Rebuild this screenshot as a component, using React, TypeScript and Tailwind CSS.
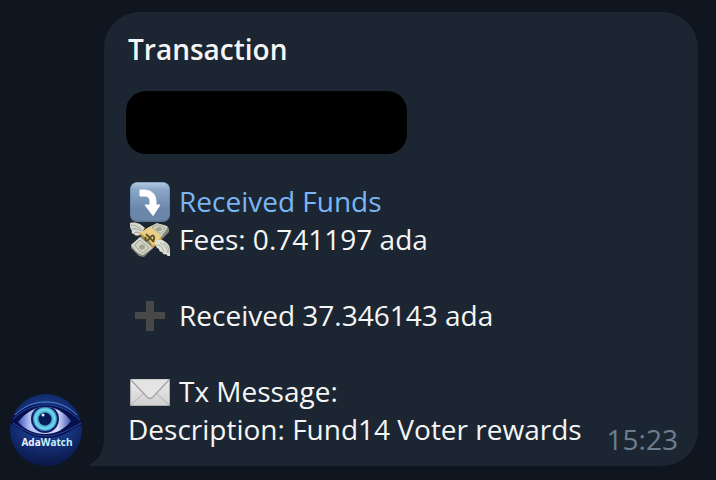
import type { ReactNode } from "react";

function Avatar() {
  return (
    <svg viewBox="0 0 72 72" className="size-[72px] shrink-0" role="img" aria-label="AdaWatch">
      <defs>
        <radialGradient id="disc" cx="50%" cy="45%" r="55%">
          <stop offset="0" stopColor="#1d3f94" />
          <stop offset="0.65" stopColor="#16337c" />
          <stop offset="1" stopColor="#0e2260" />
        </radialGradient>
        <linearGradient id="shade" x1="0" y1="0" x2="0" y2="1">
          <stop offset="0.6" stopColor="#081540" stopOpacity="0" />
          <stop offset="1" stopColor="#081540" stopOpacity="0.7" />
        </linearGradient>
        <linearGradient id="white" x1="0" y1="0" x2="1" y2="0">
          <stop offset="0" stopColor="#3f52b4" />
          <stop offset="0.22" stopColor="#b4c1f6" />
          <stop offset="0.75" stopColor="#d3dcfc" />
          <stop offset="1" stopColor="#3f52b4" />
        </linearGradient>
        <radialGradient id="iris">
          <stop offset="0.5" stopColor="#3a9ccc" />
          <stop offset="0.8" stopColor="#6fd6ea" />
          <stop offset="1" stopColor="#3289ba" />
        </radialGradient>
        <clipPath id="round"><circle cx="36" cy="36" r="36" /></clipPath>
        <clipPath id="lids"><path d="M8 28C17 17 26 13 35 13c10 0 18 4 26 14-7 9-16 13-26 13S15 36 8 28Z" /></clipPath>
      </defs>
      <g clipPath="url(#round)">
        <rect width="72" height="72" fill="url(#disc)" />
        <rect width="72" height="72" fill="url(#shade)" />
        <path d="M0 25C10 16 20 10 35 10s27 7 37 16v4C62 35 52 44 36 44S12 35 0 29Z" fill="#07104a" />
        <path d="M5 21C14 12 24 8 36 8s22 4 31 13" fill="none" stroke="#5485cc" strokeWidth="1" />
        <path d="M3 25C14 15 24 11 36 11s23 5 34 15" fill="none" stroke="#2449a8" strokeWidth="1" />
        <path d="M3 29C14 36 23 42 36 42s24-7 35-13" fill="none" stroke="#2a49a4" strokeWidth="1" />
        <path d="M8 28C17 17 26 13 35 13c10 0 18 4 26 14-7 9-16 13-26 13S15 36 8 28Z" fill="url(#white)" />
        <g clipPath="url(#lids)">
          <circle cx="35" cy="25" r="14" fill="#101d66" />
          <circle cx="35" cy="25" r="12" fill="url(#iris)" />
          <circle cx="35" cy="25" r="9.500" fill="none" stroke="#8feaf2" strokeWidth="2.500" strokeDasharray="1 1" opacity="0.4" />
          <circle cx="35" cy="25" r="6.500" fill="#081a55" />
          <circle cx="33" cy="21" r="1.500" fill="#d8f6ff" />
        </g>
      </g>
      <text x="37" y="52" textAnchor="middle" fontSize="10" fontWeight="700" fontFamily="Open Sans, sans-serif" fill="#f0f5ff">
        Ada<tspan fill="#c4f2fa">Watch</tspan>
      </text>
    </svg>
  );
}

function ArrowIcon() {
  return (
    <svg viewBox="0 -1 42 42" className="size-[42px] shrink-0" aria-hidden="true">
      <defs>
        <linearGradient id="key" x1="0" y1="0" x2="0" y2="1">
          <stop offset="0" stopColor="#b3cbe2" />
          <stop offset="0.18" stopColor="#8ba8c9" />
          <stop offset="0.7" stopColor="#6a87ab" />
          <stop offset="1" stopColor="#6a87aa" />
        </linearGradient>
      </defs>
      <rect x="2" y="1" width="40" height="40" rx="7" fill="#5b7595" />
      <rect x="2.500" y="1.500" width="39" height="38" rx="6.500" fill="url(#key)" />
      <path d="M12 9H16C23 9 28 13 28 21v3h4L25 34.500 17 24h5v-3c0-4-2-6-6-6h-4Z" fill="#fff" stroke="#fff" strokeWidth="1" strokeLinejoin="round" />
    </svg>
  );
}

function MoneyIcon() {
  return (
    <svg viewBox="0 -1 42 42" className="size-[42px] shrink-0" aria-hidden="true">
      <path d="M2 4c4-1 7 0 10 1l5 4-5 7c-3 1-5 1-6-1-2 0-3-2-2-3-2-2-2-5-2-8Z" fill="#d9dad0" />
      <path d="M3 6c4 0 8 2 11 5M4 10c3-1 6 0 9 2M6 14c2-1 4-1 6 0" fill="none" stroke="#94968a" strokeWidth="0.800" />
      <path d="M3 26 25 7 41 9v4L16 38 11 37 3 29Z" fill="#85877a" />
      <path d="M3 26 12 18 25 29 15 36C10 35 6 31 3 26Z" fill="#d3d4c5" />
      <path d="M21 8 29 4c4 2 8 1 11 4l-7 10Z" fill="#d3d4c5" />
      <path d="M7 26 12 21 21 29 15 34C12 32 9 30 7 26ZM24 8 29 6c3 1 6 1 8 3l-4 6Z" fill="none" stroke="#979a88" strokeWidth="0.800" />
      <ellipse cx="14" cy="28" rx="3" ry="2.500" fill="#a0a48f" />
      <ellipse cx="31" cy="10" rx="3" ry="2" fill="#a0a48f" />
      <path d="M12 14 21 8c5 2 9 6 12 10v3l-8 8c-3-6-8-10-13-13Z" fill="#c9963a" />
      <path d="M12 14 21 8c5 2 9 6 12 10l-8 9c-3-6-8-10-13-13Z" fill="#ebcf86" />
      <path d="M18 18c-2 3 1 5 3 2s4-5 5-2-1 4-2 4M18 15l8 8" fill="none" stroke="#5c5028" strokeWidth="1.800" />
      <path d="M27 23c2-3 6-3 9-1 4 2 6 5 6 9v6c-2 0-3 0-4-2-2 1-3 0-4-2-2 0-3-1-3-3-3-1-4-4-4-7Z" fill="#dedfd5" />
      <path d="M29 26c4 0 6 3 7 7M32 24c4 1 7 5 8 10M36 24c3 2 5 5 5 9" fill="none" stroke="#9a9c90" strokeWidth="0.800" />
    </svg>
  );
}

function PlusIcon() {
  return (
    <svg viewBox="0 -1 42 42" className="size-[42px] shrink-0" aria-hidden="true">
      <path d="M18 6h8v11h11v7H26v12h-8V24H7v-7h11Z" fill="#484848" />
    </svg>
  );
}

function EnvelopeIcon() {
  return (
    <svg viewBox="0 -1 42 42" className="size-[42px] shrink-0" aria-hidden="true">
      <defs>
        <linearGradient id="paper" x1="0" y1="0" x2="0" y2="1">
          <stop offset="0" stopColor="#ededed" />
          <stop offset="1" stopColor="#d0d0d0" />
        </linearGradient>
      </defs>
      <rect x="2" y="8" width="40" height="27" rx="1" fill="#aaa" />
      <rect x="3" y="8.500" width="38" height="25.500" rx="0.500" fill="url(#paper)" />
      <path d="M3 34 16 22M41 34 28 22" stroke="#b0b0b0" strokeWidth="1" />
      <path d="M3 9 19 26c2 2 4 2 6 0L41 9Z" fill="#e4e4e4" />
      <path d="M3 9 19 26c2 2 4 2 6 0L41 9" fill="none" stroke="#a2a2a7" strokeWidth="1.200" />
    </svg>
  );
}

function Row({ icon, children }: { icon: ReactNode; children: ReactNode }) {
  return (
    <div className="flex h-[38px] items-center gap-[9px]">
      {icon}
      {children}
    </div>
  );
}

export default function App() {
  return (
    <main className="flex min-h-screen items-start bg-[#0f161f] pt-3 pr-[18px] pb-3.5 pl-2.5 font-['Open_Sans','Noto_Sans',sans-serif] text-[28px] leading-[38px] text-[#f5f5f5]">
      <div className="flex w-full items-end gap-[22px]">
        <Avatar />
        <article className="relative min-w-0 flex-1 rounded-[36px] rounded-bl-none bg-[#1c2632] pt-[18px] pr-5 pb-2 pl-6">
          <svg viewBox="0 0 14 36" className="absolute bottom-0 -left-3.5 h-9 w-3.5" aria-hidden="true">
            <path d="M14 0v36H0c-1 0-1-1 0-2C10 29 14 20 14 8Z" fill="#1c2632" />
          </svg>
          <h1 className="font-semibold">Transaction</h1>
          <div className="mt-[23px] mb-7 -ml-0.5 h-[63px] w-[281px] max-w-full rounded-[20px] bg-black" />
          <Row icon={<ArrowIcon />}>
            <a href="#funds" className="text-[#7ab5f5]">Received Funds</a>
          </Row>
          <Row icon={<MoneyIcon />}>
            <p>Fees: 0.741197 ada</p>
          </Row>
          <div className="py-[38px]">
            <Row icon={<PlusIcon />}>
              <p>Received 37.346143 ada</p>
            </Row>
          </div>
          <Row icon={<EnvelopeIcon />}>
            <p>Tx Message:</p>
          </Row>
          <div className="flex justify-between">
            <p>Description: Fund14 Voter rewards</p>
            <time className="pt-2.5 text-[#6d7f8f]">15:23</time>
          </div>
        </article>
      </div>
    </main>
  );
}
